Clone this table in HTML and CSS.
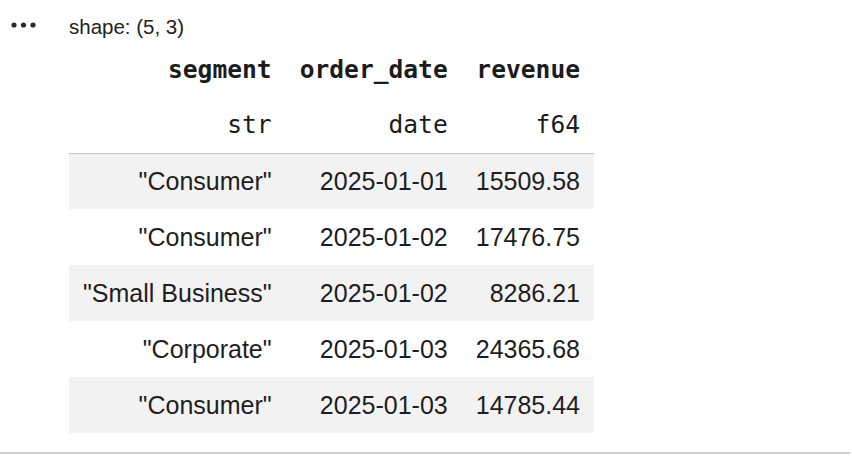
FILE: index.html
```html
<!DOCTYPE html>
<html>
<head>
<meta charset="utf-8">
<link rel="stylesheet" href="styles.css">
</head>
<body>
<div class="cell">
  <div class="prompt">
    <svg class="dots" width="40" height="10" viewBox="0 0 40 10"><circle cx="14" cy="5" r="2.6"/><circle cx="23.5" cy="5" r="2.6"/><circle cx="33" cy="5" r="2.6"/></svg>
  </div>
  <div class="output">
    <div class="shape">shape: (5, 3)</div>
    <table class="df">
      <thead>
        <tr class="names"><th>segment</th><th>order_date</th><th>revenue</th></tr>
        <tr class="dtypes"><td>str</td><td>date</td><td>f64</td></tr>
      </thead>
      <tbody>
        <tr><td>"Consumer"</td><td>2025-01-01</td><td>15509.58</td></tr>
        <tr><td>"Consumer"</td><td>2025-01-02</td><td>17476.75</td></tr>
        <tr><td>"Small Business"</td><td>2025-01-02</td><td>8286.21</td></tr>
        <tr><td>"Corporate"</td><td>2025-01-03</td><td>24365.68</td></tr>
        <tr><td>"Consumer"</td><td>2025-01-03</td><td>14785.44</td></tr>
      </tbody>
    </table>
  </div>
</div>
</body>
</html>
```
FILE: styles.css
```css
html, body {
  margin: 0;
  padding: 0;
  background: #ffffff;
}
body {
  font-family: "Liberation Sans", Arial, sans-serif;
  color: #1e1e1e;
}
.cell {
  display: flex;
  width: 850px;
  padding-bottom: 19px;
  border-bottom: 2px solid #d0d0d0;
}
.prompt {
  width: 69px;
  flex: none;
  padding-top: 20px;
}
.dots {
  display: block;
  fill: #2a2a2a;
}
.output {
  padding-top: 16px;
}
.shape {
  font-size: 20.5px;
  line-height: 22px;
  height: 20px;
  color: #222;
}
.df {
  border-collapse: collapse;
  margin-top: 5px;
}
.df th, .df td {
  height: 56px;
  padding: 0 14px;
  text-align: right;
  box-sizing: border-box;
  white-space: nowrap;
}
.df th {
  font-family: "DejaVu Sans Mono", "Liberation Mono", monospace;
  font-weight: bold;
  font-size: 24.6px;
  color: #1c1c1c;
}
.dtypes td {
  font-family: "DejaVu Sans Mono", "Liberation Mono", monospace;
  font-size: 24.6px;
  color: #1c1c1c;
  border-bottom: 1px solid #c4c4c4;
}
.df tbody td {
  font-size: 25px;
  color: #1e1e1e;
}
.df tbody tr:nth-child(odd) {
  background: #f2f2f2;
}
```
